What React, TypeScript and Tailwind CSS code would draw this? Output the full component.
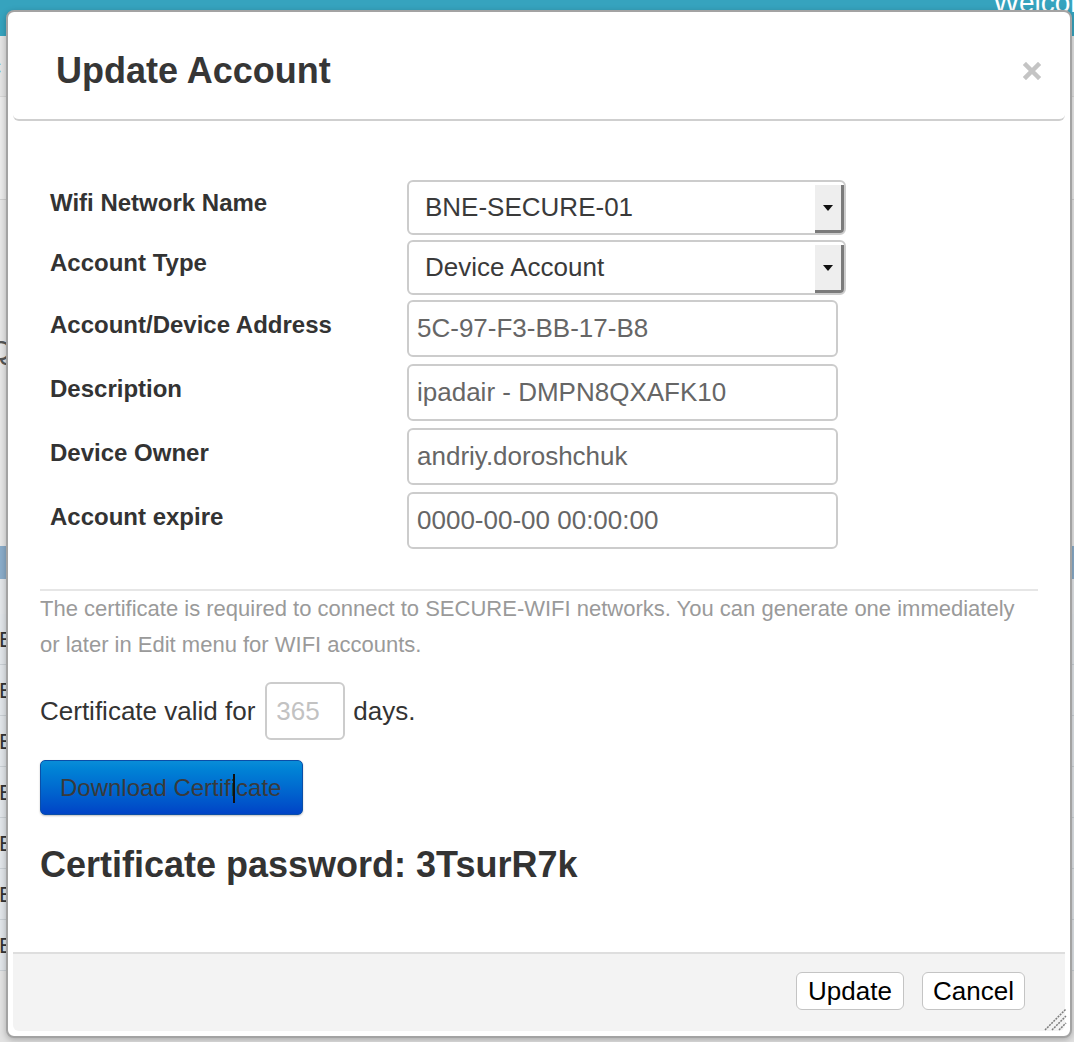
import React from 'react';

const font = "font-['Liberation_Sans',Arial,Helvetica,sans-serif]";

const SelectBox = ({ value }: { value: string }) => (
  <div className="flex w-[439px] h-[55px] rounded-[6px] border-2 border-[#cccccc] bg-white">
    <div className="flex-1 flex items-center pl-[16px] text-[26px] text-[#3a3a3a]">{value}</div>
    <div className="w-[29px] mt-[3px] mb-[0px] flex items-center justify-center bg-[#eeeeee] border-r-[3px] border-b-[3px] border-[#7b7b7b] rounded-br-[4px]">
      <svg width="10" height="6" viewBox="0 0 10 6">
        <polygon points="0,0 10,0 5,6" fill="#111" />
      </svg>
    </div>
  </div>
);

const TextBox = ({ value }: { value: string }) => (
  <div className="flex items-center w-[431px] h-[57px] rounded-[6px] border-2 border-[#cccccc] bg-white pl-[8px] text-[26px] text-[#666666]">
    {value}
  </div>
);

const FormRow = ({ label, tall, children }: { label: string; tall?: boolean; children: React.ReactNode }) => (
  <div className={`flex ${tall ? 'h-[64px]' : 'h-[60px]'}`}>
    <div className={`w-[367px] pl-[10px] ${tall ? 'pt-[11px]' : 'pt-[9px]'} text-[24px] leading-[28px] font-bold text-[#333333]`}>
      {label}
    </div>
    {children}
  </div>
);

const BackgroundPage = () => (
  <div className="flex flex-col h-full">
    <div className="h-[36px] shrink-0 bg-[#36a3be] pl-[993px] overflow-hidden">
      <div className="-mt-[11px] text-[28px] leading-none text-white whitespace-nowrap">Welcome, andriy</div>
    </div>
    <div className="h-[61px] shrink-0 bg-[#e4e4e4] flex items-center border-b border-[#d6d6d6] overflow-hidden">
      <span className="-ml-[12px] text-[26px] text-[#2d7fc1]">c</span>
    </div>
    <div className="h-[103px] shrink-0 bg-[#ebebeb] border-b border-[#d0d0d0]" />
    <div className="h-[346px] shrink-0 bg-[#e6e6e6] pt-[130px] overflow-hidden">
      <span className="-ml-[10px] text-[28px] text-[#555]">Q</span>
    </div>
    <div className="h-[33px] shrink-0 bg-[#8aacc9]" />
    <div className="h-[35px] shrink-0 bg-[#e3e6e9]" />
    {[0, 1, 2, 3, 4, 5, 6].map((i) => (
      <div key={i} className="h-[51px] shrink-0 bg-[#e1e5e9] border-b border-[#c9cfd4] flex items-center overflow-hidden">
        <span className="-ml-[1px] text-[22px] text-[#333]">E</span>
      </div>
    ))}
    <div className="flex-1 bg-[#e2e2e2]" />
  </div>
);

export default function App() {
  return (
    <div className={`relative w-[1074px] h-[1042px] overflow-hidden bg-[#e2e2e2] ${font}`}>
      <BackgroundPage />

      <div className="absolute left-[6px] top-[10px] w-[1066px] h-[1028px] flex flex-col rounded-[8px] border-2 border-[#a3a3a3] bg-white p-[5px] shadow-[0_2px_6px_rgba(0,0,0,0.25)]">
        {/* header */}
        <div className="h-[104px] shrink-0 flex items-center justify-between pl-[43px] pr-[24px] pt-[5px] border-b-2 border-[#cfcfcf] rounded-b-[6px]">
          <h3 className="text-[36px] font-bold text-[#363636]">Update Account</h3>
          <svg width="18" height="18" viewBox="0 0 18 18">
            <path d="M3 3 L15 15 M15 3 L3 15" stroke="#c4c4c4" strokeWidth="4.5" strokeLinecap="square" />
          </svg>
        </div>

        {/* body */}
        <div className="flex-1 flex flex-col px-[27px] pt-[59px]">
          <FormRow label="Wifi Network Name">
            <SelectBox value="BNE-SECURE-01" />
          </FormRow>
          <FormRow label="Account Type">
            <SelectBox value="Device Account" />
          </FormRow>
          <FormRow label="Account/Device Address" tall>
            <TextBox value="5C-97-F3-BB-17-B8" />
          </FormRow>
          <FormRow label="Description" tall>
            <TextBox value="ipadair - DMPN8QXAFK10" />
          </FormRow>
          <FormRow label="Device Owner" tall>
            <TextBox value="andriy.doroshchuk" />
          </FormRow>
          <FormRow label="Account expire" tall>
            <TextBox value="0000-00-00 00:00:00" />
          </FormRow>

          <div className="mt-[33px] h-[2px] bg-[#e6e6e6]" />
          <p className="text-[22px] leading-[36px] text-[#9a9a9a]">
            <span className="block whitespace-nowrap">
              The certificate is required to connect to SECURE-WIFI networks. You can generate one immediately
            </span>
            <span className="block whitespace-nowrap">or later in Edit menu for WIFI accounts.</span>
          </p>

          <div className="mt-[19px] flex items-center text-[26px] text-[#333333]">
            <span>Certificate valid for</span>
            <div className="ml-[10px] w-[80px] h-[58px] flex items-center pl-[9px] rounded-[6px] border-2 border-[#cccccc] text-[#c2c2c2]">
              365
            </div>
            <span className="ml-[8px]">days.</span>
          </div>

          <div className="mt-[20px]">
            <button className="relative w-[263px] h-[55px] rounded-[5px] border border-[#0a4ea8] bg-linear-to-b from-[#0a8dd8] to-[#0043c6] text-left pl-[19px] text-[24px] text-[#3a3a3a] shadow-[0_1px_2px_rgba(0,0,0,0.25)]">
              Download Certificate
              <span className="absolute left-[192px] top-[13px] w-[2px] h-[29px] bg-[#111]" />
            </button>
          </div>

          <div className="mt-[29px] text-[36px] leading-[42px] font-bold text-[#333333]">
            Certificate password: 3TsurR7k
          </div>
        </div>

        {/* footer */}
        <div className="h-[79px] shrink-0 flex justify-end items-start gap-[18px] pt-[18px] pr-[40px] border-t-2 border-[#dedede] bg-[#f3f3f3] rounded-b-[6px]">
          <button className="w-[108px] h-[38px] rounded-[6px] border border-[#c4c4c4] bg-white text-[26px] leading-none text-black">
            Update
          </button>
          <button className="w-[103px] h-[38px] rounded-[6px] border border-[#c4c4c4] bg-white text-[26px] leading-none text-black">
            Cancel
          </button>
        </div>

        <svg className="absolute right-[3px] bottom-[5px]" width="24" height="24" viewBox="0 0 24 24">
          <path d="M2 23 L23 2 M9 23 L23 9 M16 23 L23 16" stroke="#7d7d7d" strokeWidth="1.5" strokeDasharray="2 1" />
        </svg>
      </div>
    </div>
  );
}
